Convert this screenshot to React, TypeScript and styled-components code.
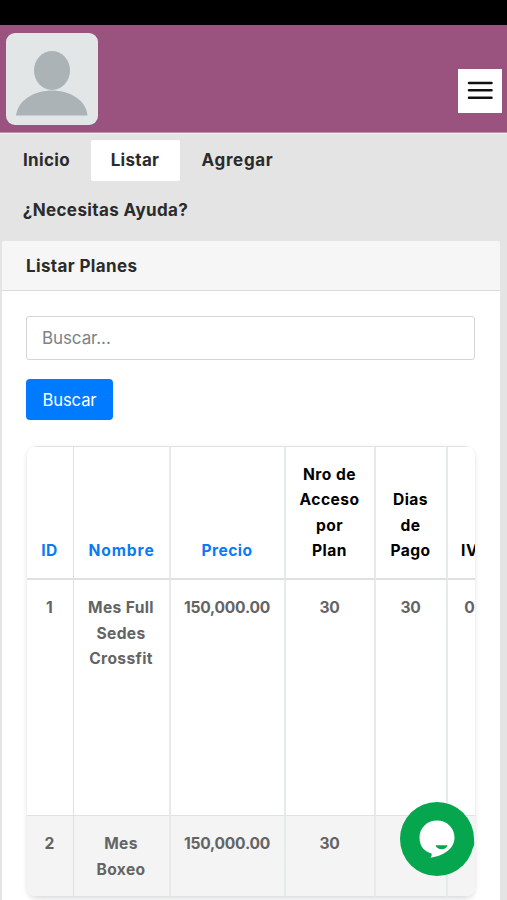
import React from "react";
import styled, { createGlobalStyle } from "styled-components";

const GlobalStyle = createGlobalStyle`
  * { box-sizing: border-box; }
  body { margin: 0; overflow: hidden; background: #e4e4e4; }
`;

const Page = styled.div`
  width: 100%;
  height: 900px;
  display: flex;
  flex-direction: column;
  overflow: hidden;
  background: #e4e4e4;
  color: #2b2b2b;
  font-family: Inter, sans-serif;
`;

const StatusBar = styled.div`
  flex: 0 0 25px;
  background: #000;
`;

const Header = styled.header`
  flex: 0 0 108px;
  display: flex;
  justify-content: space-between;
  align-items: flex-start;
  padding: 8px 5px 0 6px;
  background: #9a537f;
  border-bottom: 1px solid #bd90ad;
`;

const Avatar = styled.div`
  width: 92px;
  height: 92px;
  border-radius: 9px;
  overflow: hidden;
  background: #e3e6e7;
  svg { display: block; }
`;

const MenuButton = styled.button`
  width: 44px;
  height: 44px;
  margin-top: 36px;
  padding: 0;
  border: 0;
  background: #fff;
  svg { display: block; }
`;

const Nav = styled.nav`
  flex: 0 0 108px;
  display: flex;
  flex-wrap: wrap;
  align-content: flex-start;
  row-gap: 9px;
  padding: 6px 100px 0 3px;
  border-top: 1px solid #f1edf0;
`;

const NavItem = styled.a<{ $width: number; $active?: boolean; $spacing: number }>`
  width: ${(p) => p.$width}px;
  height: 41px;
  padding-right: 1px;
  text-align: center;
  line-height: 40px;
  font-size: 17px;
  font-weight: 700;
  white-space: nowrap;
  letter-spacing: ${(p) => p.$spacing}px;
  border-radius: 2px;
  background: ${(p) => (p.$active ? "#fff" : "transparent")};
`;

const Card = styled.main`
  flex: 1;
  min-height: 0;
  margin: 0 7px 0 2px;
  border-radius: 3px 3px 0 0;
  background: #fff;
`;

const CardTitle = styled.h1`
  height: 50px;
  margin: 0;
  padding-left: 24px;
  line-height: 50px;
  font-size: 17px;
  font-weight: 700;
  letter-spacing: 0.36px;
  background: #f6f6f6;
  border-radius: 3px 3px 0 0;
  border-bottom: 1px solid #d9d9d9;
`;

const CardBody = styled.div`
  padding: 25px 24px 0;
`;

const SearchInput = styled.input`
  display: block;
  width: 449px;
  height: 44px;
  padding: 0 15px;
  border: 1px solid #d3d6d9;
  border-radius: 3px;
  outline: 0;
  background: #fff;
  font: 400 17px Inter, sans-serif;
  letter-spacing: -0.1px;
  &::placeholder { color: #7b8288; opacity: 1; }
`;

const SearchButton = styled.button`
  display: block;
  width: 87px;
  height: 41px;
  margin-top: 19px;
  padding: 0;
  border: 0;
  border-radius: 4px;
  background: #007bff;
  color: #fff;
  font: 400 16.6px Inter, sans-serif;
  letter-spacing: -0.1px;
`;

const TableFrame = styled.div`
  width: 448px;
  height: 451px;
  margin: 26px 0 0 1px;
  overflow: hidden;
  border-radius: 10px;
  box-shadow: 0 2px 5px rgba(0, 0, 0, 0.13);
`;

const Table = styled.table`
  width: 477px;
  table-layout: fixed;
  border-collapse: separate;
  border-spacing: 0;
  border-top: 1px solid #e0e3e5;
  font-size: 15.6px;
  line-height: 25.6px;
  font-weight: 700;
  text-align: center;
`;

const Col = styled.col<{ $width: number }>`
  width: ${(p) => p.$width}px;
`;

const HeadCell = styled.th<{ $link?: boolean }>`
  height: 133px;
  padding: 0 1px 14px 0;
  vertical-align: bottom;
  white-space: pre-line;
  letter-spacing: 0.45px;
  color: ${(p) => (p.$link ? "#0b7bf5" : "#000")};
  border-right: 2px solid #e7eaeb;
  border-bottom: 2px solid #dee1e4;
  &:first-child { border-right: 1px solid #dee1e4; }
  &:nth-child(2) { letter-spacing: 0.9px; padding-right: 0; }
  &:last-child { padding-right: 0; }
`;

const Row = styled.tr<{ $height: number; $striped?: boolean }>`
  height: ${(p) => p.$height}px;
  background: ${(p) => (p.$striped ? "#f4f4f4" : "#fff")};
`;

const Cell = styled.td<{ $numeric?: boolean }>`
  padding: 15px 1px 0 0;
  vertical-align: top;
  white-space: pre-line;
  color: #646464;
  letter-spacing: ${(p) => (p.$numeric ? -0.25 : 0.35)}px;
  border-right: 2px solid #e7eaeb;
  border-bottom: 1px solid #dee2e4;
  &:first-child { border-right: 1px solid #dee1e4; }
  &:last-child { padding: 15px 0 0 3px; }
`;

const ChatButton = styled.button`
  position: fixed;
  left: 400px;
  top: 802px;
  width: 74px;
  height: 74px;
  padding: 0;
  border: 0;
  border-radius: 50%;
  background: #05a64d;
  svg { display: block; }
`;

const tabs = [
  { label: "Inicio", width: 88, spacing: 0.35 },
  { label: "Listar", width: 89, spacing: 0.3, active: true },
  { label: "Agregar", width: 116, spacing: 0.65 },
  { label: "¿Necesitas Ayuda?", width: 206, spacing: 0.38 },
];

const columns = [
  { label: "ID", width: 47, link: true },
  { label: "Nombre", width: 97, link: true },
  { label: "Precio", width: 115, link: true },
  { label: "Nro de\nAcceso\npor\nPlan", width: 90 },
  { label: "Dias\nde\nPago", width: 72 },
  { label: "IVA", width: 56 },
];

const rows = [
  { height: 236, cells: ["1", "Mes Full\nSedes\nCrossfit", "150,000.00", "30", "30", "0.0"] },
  { height: 81, cells: ["2", "Mes\nBoxeo", "150,000.00", "30", "30", "0.0"] },
];

export default function App() {
  return (
    <Page>
      <GlobalStyle />
      <StatusBar />
      <Header>
        <Avatar>
          <svg width="92" height="92" viewBox="0 0 92 92" fill="#acb3b6">
            <ellipse cx="46" cy="37.5" rx="18" ry="19.5" />
            <path d="M10 82.5C12 67 28 57.5 46 57.5S80 67 81.5 82.5Z" />
          </svg>
        </Avatar>
        <MenuButton aria-label="Menu">
          <svg width="44" height="44" viewBox="0 0 44 44" stroke="#111" strokeWidth="2.5" strokeLinecap="round">
            <path d="M11 14H33.5M11 21.3H33.5M11 28.7H33.5" />
          </svg>
        </MenuButton>
      </Header>
      <Nav>
        {tabs.map((t) => (
          <NavItem key={t.label} $width={t.width} $active={t.active} $spacing={t.spacing}>
            {t.label}
          </NavItem>
        ))}
      </Nav>
      <Card>
        <CardTitle>Listar Planes</CardTitle>
        <CardBody>
          <SearchInput placeholder="Buscar..." />
          <SearchButton>Buscar</SearchButton>
          <TableFrame>
            <Table>
              <colgroup>
                {columns.map((c) => (
                  <Col key={c.label} $width={c.width} />
                ))}
              </colgroup>
              <thead>
                <tr>
                  {columns.map((c) => (
                    <HeadCell key={c.label} $link={c.link}>
                      {c.label}
                    </HeadCell>
                  ))}
                </tr>
              </thead>
              <tbody>
                {rows.map((r, i) => (
                  <Row key={i} $height={r.height} $striped={i % 2 === 1}>
                    {r.cells.map((c, j) => (
                      <Cell key={j} $numeric={j > 1}>{c}</Cell>
                    ))}
                  </Row>
                ))}
              </tbody>
            </Table>
          </TableFrame>
        </CardBody>
      </Card>
      <ChatButton aria-label="Chat">
        <svg width="74" height="74" viewBox="0 0 74 74">
          <path
            d="M37 18.5C27 18.5 19.5 26 19.5 35.5C19.5 44 24 49.5 31.5 51.5C32 53 31.5 54.5 30.5 55.7C36 55 43 52.5 47.5 49C52 45.5 54.5 41 54.5 35.5C54.5 26 47 18.5 37 18.5Z"
            fill="#fff"
          />
          <path d="M35.5 43.2H47.5C46.5 48.5 37 48.5 35.5 43.2Z" fill="#05a64d" />
        </svg>
      </ChatButton>
    </Page>
  );
}
